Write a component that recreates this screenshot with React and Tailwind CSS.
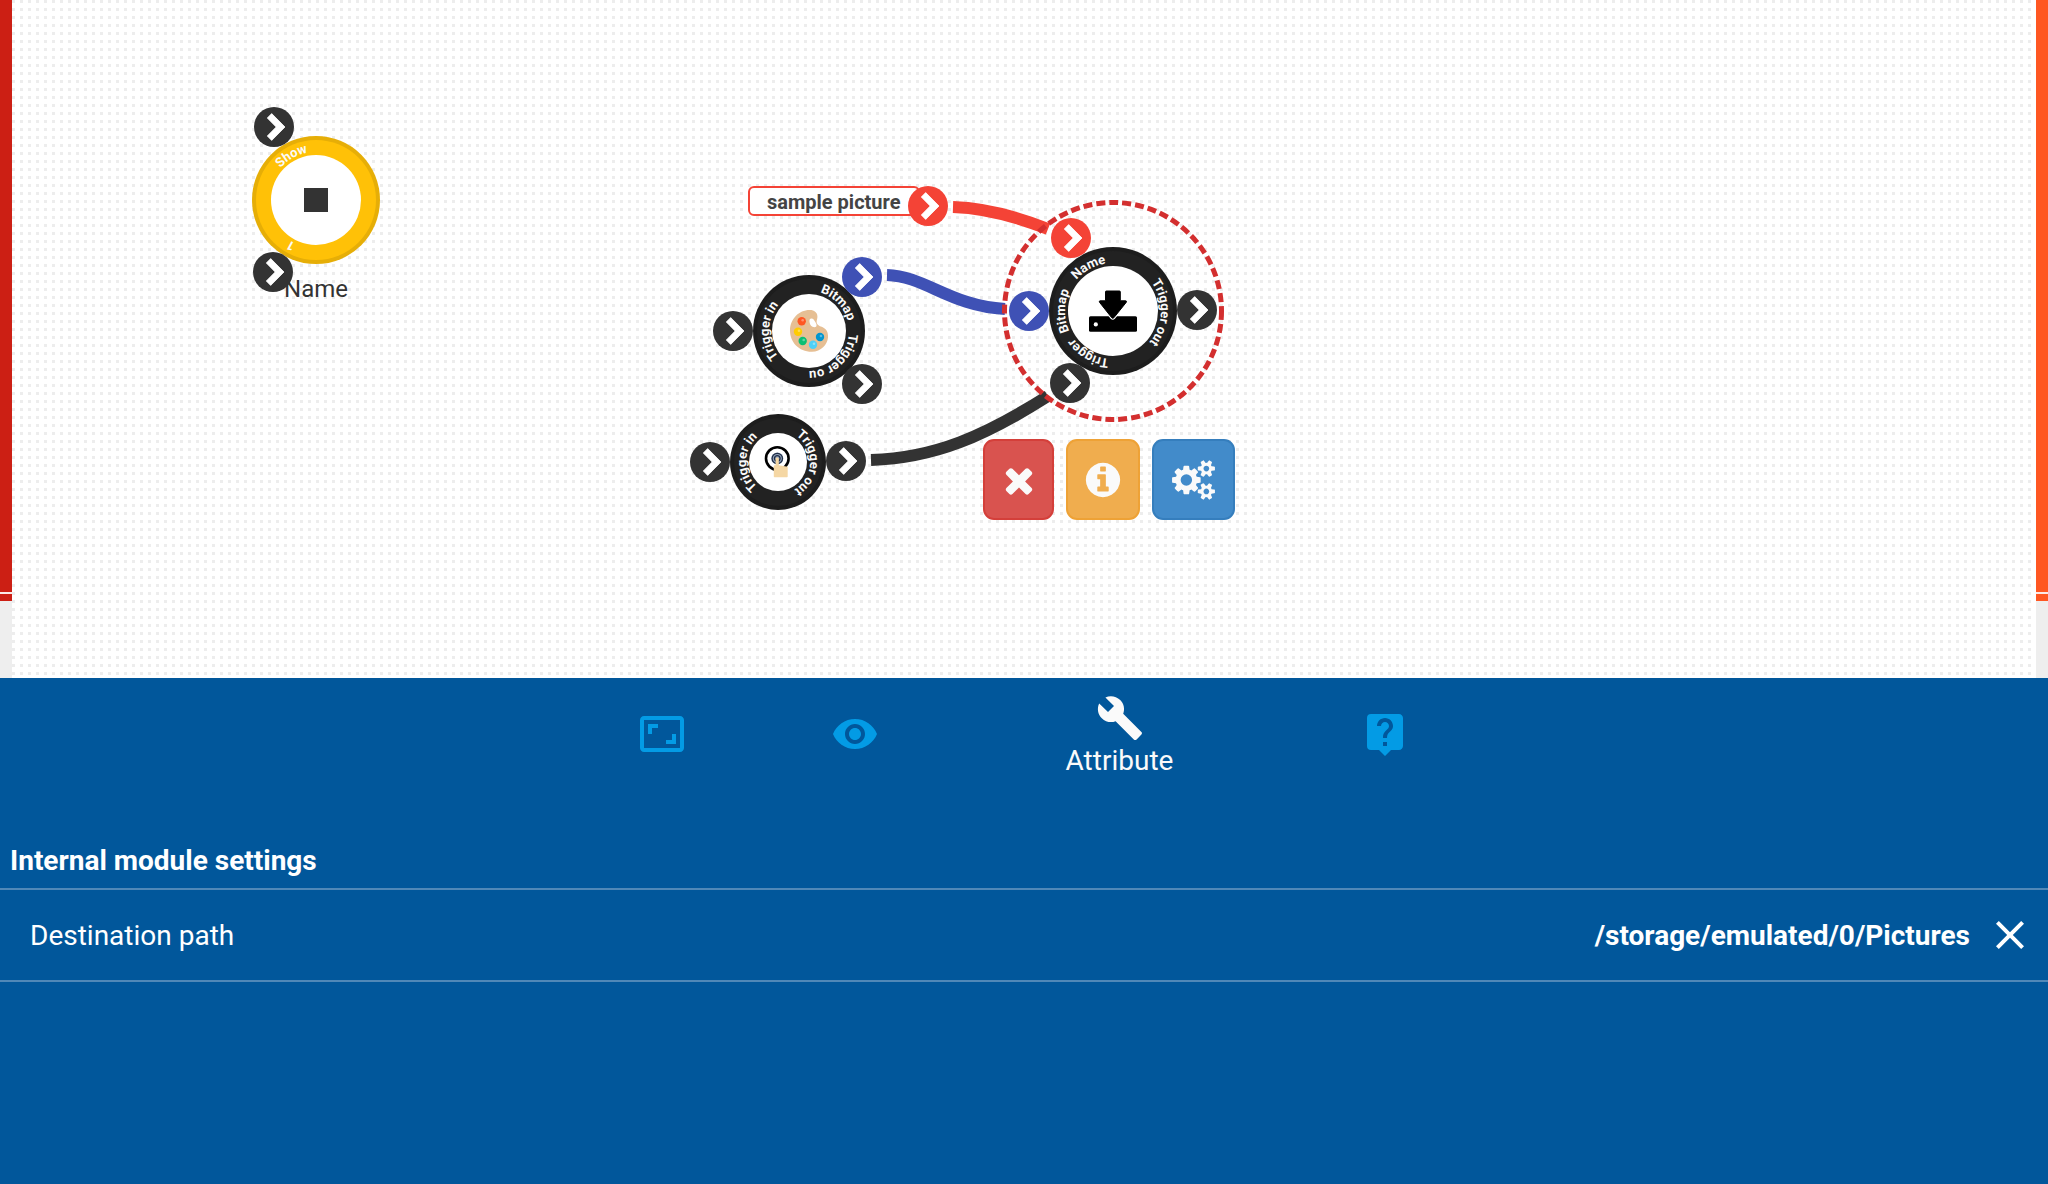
import React from "react";
import {
  MdAspectRatio,
  MdVisibility,
  MdBuild,
  MdLiveHelp,
  MdClose,
} from "react-icons/md";

const FA_TIMES =
  "M1490 1322q0 40-28 68l-136 136q-28 28-68 28t-68-28l-294-294-294 294q-28 28-68 28t-68-28l-136-136q-28-28-28-68t28-68l294-294-294-294q-28-28-28-68t28-68l136-136q28-28 68-28t68 28l294 294 294-294q28-28 68-28t68 28l136 136q28 28 28 68t-28 68l-294 294 294 294q28 28 28 68z";
const FA_INFO =
  "M1152 1376v-160q0-14-9-23t-23-9h-96v-512q0-14-9-23t-23-9h-320q-14 0-23 9t-9 23v160q0 14 9 23t23 9h96v320h-96q-14 0-23 9t-9 23v160q0 14 9 23t23 9h448q14 0 23-9t9-23zm-128-896v-160q0-14-9-23t-23-9h-192q-14 0-23 9t-9 23v160q0 14 9 23t23 9h192q14 0 23-9t9-23zm640 416q0 209-103 385.5t-279.5 279.5-385.5 103-385.5-103-279.5-279.5-103-385.5 103-385.5 279.5-279.5 385.5-103 385.5 103 279.5 279.5 103 385.5z";
const FA_COGS =
  "M832 896q0-106-75-181t-181-75-181 75-75 181 75 181 181 75 181-75 75-181zm768 512q0-52-38-90t-90-38-90 38-38 90q0 53 37.5 90.5t90.5 37.5 90.5-37.5 37.5-90.5zm0-1024q0-52-38-90t-90-38-90 38-38 90q0 53 37.5 90.5t90.5 37.5 90.5-37.5 37.5-90.5zm-384 421v185q0 10-7 19.5t-16 10.5l-155 24q-11 35-32 76 34 48 90 115 7 11 7 20 0 12-7 19-23 30-82.5 89.5t-78.5 59.5q-11 0-21-7l-115-90q-37 19-77 31-11 108-23 155-7 24-30 24h-186q-11 0-20-7.5t-10-17.5l-23-153q-34-10-75-31l-118 89q-7 7-20 7-11 0-21-8-144-133-144-160 0-9 7-19 10-14 41-53t47-61q-23-44-35-82l-152-24q-10-1-17-9.5t-7-19.5v-185q0-10 7-19.5t16-10.5l155-24q11-35 32-76-34-48-90-115-7-11-7-20 0-12 7-20 22-30 82-89t79-59q11 0 21 7l115 90q34-18 77-32 11-108 23-154 7-24 30-24h186q11 0 20 7.5t10 17.5l23 153q34 10 75 31l118-89q8-7 20-7 11 0 21 8 144 133 144 160 0 8-7 19-12 16-42 54t-45 60q23 48 34 82l152 23q10 2 17 10.5t7 19.5zm640 533v140q0 16-149 31-12 27-30 52 51 113 51 138 0 4-4 7-122 71-124 71-8 0-46-47t-52-68q-20 2-30 2t-30-2q-14 21-52 68t-46 47q-2 0-124-71-4-3-4-7 0-25 51-138-18-25-30-52-149-15-149-31v-140q0-16 149-31 13-29 30-52-51-113-51-138 0-4 4-7 4-2 35-20t59-34 30-16q8 0 46 46.5t52 67.5q20-2 30-2t30 2q51-71 92-112l6-2q4 0 124 70 4 3 4 7 0 25-51 138 17 23 30 52 149 15 149 31zm0-1024v140q0 16-149 31-12 27-30 52 51 113 51 138 0 4-4 7-122 71-124 71-8 0-46-47t-52-68q-20 2-30 2t-30-2q-14 21-52 68t-46 47q-2 0-124-71-4-3-4-7 0-25 51-138-18-25-30-52-149-15-149-31v-140q0-16 149-31 13-29 30-52-51-113-51-138 0-4 4-7 4-2 35-20t59-34 30-16q8 0 46 46.5t52 67.5q20-2 30-2t30 2q51-71 92-112l6-2q4 0 124 70 4 3 4 7 0 25-51 138 17 23 30 52 149 15 149 31z";

/* Arc through `angle` (degrees clockwise from east), drawn clockwise. */
function arcPath(r, angle) {
  const at = (deg) => {
    const a = (deg * Math.PI) / 180;
    return `${(r * Math.cos(a)).toFixed(2)} ${(r * Math.sin(a)).toFixed(2)}`;
  };
  return `M${at(angle - 85)} A${r} ${r} 0 0 1 ${at(angle + 85)}`;
}

function Port({ x, y, color = "bg-[#333333]", label }) {
  return (
    <button
      type="button"
      aria-label={label}
      className={`absolute size-10 -translate-x-1/2 -translate-y-1/2 rounded-full ${color}`}
      style={{ left: x, top: y }}
    >
      <svg viewBox="-20 -20 40 40" className="size-10" aria-hidden="true">
        <path
          d="M-2.3 -13.4L11 0L-2.3 13.4L-6.7 9L2.2 0L-6.7 -9Z"
          fill="#fff"
          stroke="#fff"
          strokeWidth="0.8"
          strokeLinejoin="round"
        />
      </svg>
    </button>
  );
}

function Node({ id, x, y, r, inner, fill, edge, labels, children }) {
  const box = { left: x, top: y, width: r * 2, height: r * 2 };
  return (
    <div className="absolute -translate-x-1/2 -translate-y-1/2" style={box}>
      <svg
        viewBox={`${-r} ${-r} ${r * 2} ${r * 2}`}
        className="size-full"
        aria-hidden="true"
      >
        <circle r={r} fill={edge} />
        <circle r={r - 4} fill={fill} />
        <circle r={inner} fill="#fff" />
        {children}
        {labels.map(([text, angle], i) => (
          <g key={text}>
            <path id={`${id}-${i}`} d={arcPath(inner + 3, angle)} fill="none" />
            <text
              fill="#fafafa"
              textAnchor="middle"
              className="text-[13px] font-bold"
            >
              <textPath href={`#${id}-${i}`} startOffset="50%">
                {text}
              </textPath>
            </text>
          </g>
        ))}
      </svg>
    </div>
  );
}

function PaletteIcon() {
  const paints = [
    [-7.3, -9.7, "#ff5722"],
    [-11, 0.7, "#ffcc00"],
    [-6.3, 10, "#0bbf73"],
    [4, 13.7, "#4dd0f7"],
    [11, 6, "#0396cf"],
  ];
  return (
    <g>
      <path
        d="M4 -20.5C8.5 -19 9.3 -14.5 7.8 -10.8C7 -7.5 9 -5.5 12 -4.5C17 -2.8 19.5 1 19 6.5C18.3 14 12 20.5 3 20.8C-10 21 -19 11 -19 -0.5C-19 -12 -10 -21 0.5 -21C2 -21 3 -20.9 4 -20.5Z"
        fill="#e6bf94"
      />
      <path
        d="M1.5 -12.2C4 -13 5 -11 6.3 -9C8 -6.5 8.2 -4 5.5 -3.8C2.5 -3.8 1 -6 0.6 -8.5C0.3 -10.5 0.4 -11.8 1.5 -12.2Z"
        fill="#fff"
      />
      {paints.map(([cx, cy, color]) => (
        <g key={color}>
          <circle cx={cx} cy={cy} r="4.2" fill={color} />
          <circle cx={cx + 1} cy={cy - 1} r="1.3" fill="#fff" opacity="0.35" />
        </g>
      ))}
    </g>
  );
}

function TouchIcon() {
  return (
    <g>
      <circle cx="-0.7" cy="-3.5" r="11.3" fill="#fff" stroke="#000" strokeWidth="2.6" />
      <circle cx="-0.7" cy="-3.5" r="6" fill="#8fa0b8" />
      <circle cx="-0.7" cy="-3.5" r="5.2" fill="none" stroke="#1f2c44" strokeWidth="1.2" />
      <circle cx="-0.7" cy="-3.5" r="2.8" fill="none" stroke="#1f2c44" strokeWidth="1.3" />
      <path
        d="M-2.4 -3.2C-2.4 -5 0.8 -5 0.8 -3.2V3.2L9.7 4.8V14.5C9.7 15 9.5 15.3 9 15.3H-3.4C-4 15.3 -4.2 15 -4.2 14.5V4.5C-4.2 3.5 -3.5 3 -2.4 3.2Z"
        fill="#f5d7a4"
      />
    </g>
  );
}

function SaveIcon() {
  const arrow =
    "M-7.5 -19.2Q-7.5 -20 -6.7 -20H6.5Q7.3 -20 7.3 -19.2V-10.2H12.7Q14.2 -10 13.2 -8.6L0.8 6.8Q-0.2 7.8 -1.2 6.8L-13.4 -8.6Q-14.4 -10 -12.9 -10.2H-7.5Z";
  return (
    <g>
      <rect x="-24" y="5.3" width="48" height="15.4" rx="1.5" fill="#000" />
      <circle cx="-17.2" cy="13.4" r="2.1" fill="#fff" />
      <path d={arrow} fill="#fff" stroke="#fff" strokeWidth="3" />
      <path d={arrow} fill="#000" stroke="#000" strokeLinejoin="round" />
    </g>
  );
}

const RED = "bg-[#f44336]";
const BLUE = "bg-[#3f51b5]";

const ports = [
  { x: 274, y: 127, label: "Show" },
  { x: 273, y: 272, label: "1" },
  { x: 928, y: 206, color: RED, label: "sample picture output" },
  { x: 733, y: 331, label: "Trigger in" },
  { x: 862, y: 277, color: BLUE, label: "Bitmap output" },
  { x: 862, y: 384, label: "Trigger out" },
  { x: 710, y: 462, label: "Trigger in" },
  { x: 846, y: 461, label: "Trigger out" },
  { x: 1071, y: 238, color: RED, label: "Name" },
  { x: 1029, y: 311, color: BLUE, label: "Bitmap" },
  { x: 1070, y: 383, label: "Trigger" },
  { x: 1197, y: 310, label: "Trigger out" },
];

const dark = { fill: "#222222", edge: "#1d1d1d" };

function ActionButton({ label, className, children }) {
  return (
    <button
      type="button"
      aria-label={label}
      className={`flex h-[81px] items-center justify-center rounded-[11px] border-2 ${className}`}
    >
      {children}
    </button>
  );
}

function Edge({ color }) {
  return (
    <div className="flex w-3 shrink-0 flex-col bg-[#eeeeee]" aria-hidden="true">
      <div className={`h-[592px] ${color}`} />
      <div className="h-0.5 bg-[#fbe9e7]" />
      <div className={`h-[7px] ${color}`} />
    </div>
  );
}

function Canvas() {
  return (
    <main className="relative flex overflow-hidden bg-white">
      <Edge color="bg-[#cc1f14]" />
      <div className="grow bg-[linear-gradient(to_right,transparent_3px,white_3px),linear-gradient(to_bottom,#ededed_3px,white_3px)] bg-[size:8px_8px]" />
      <Edge color="bg-[#ff5722]" />

      <p
        className="absolute -translate-x-1/2 text-2xl leading-8 text-[#333333]"
        style={{ left: 316, top: 273 }}
      >
        Name
      </p>

      <div
        className="absolute flex h-[30px] w-[172px] items-center rounded-md border-2 border-[#f44336] bg-white pt-0.5 pl-[17px] text-xl font-bold text-[#444444]"
        style={{ left: 748, top: 186 }}
      >
        sample picture
      </div>

      <svg
        className="absolute overflow-visible"
        style={{ left: 0, top: 0 }}
        width="1300"
        height="600"
        fill="none"
        strokeWidth="12"
        aria-hidden="true"
      >
        <path d="M953 207C985 208 1015 216 1048 229" stroke="#f44336" />
        <path d="M887 275C925 276 950 306 1005 309" stroke="#3f51b5" />
        <path d="M871 460C935 458 985 436 1048 396" stroke="#333333" />
      </svg>

      <Node
        id="show"
        x={316}
        y={200}
        r={64}
        inner={45}
        fill="#ffc107"
        edge="#e6ae07"
        labels={[["Show", -119], ["1", 119]]}
      >
        <rect x="-12" y="-12" width="24" height="24" fill="#333" />
      </Node>
      <Node
        id="bitmap"
        x={809}
        y={331}
        r={56}
        inner={37}
        {...dark}
        labels={[["Bitmap", -44], ["Trigger ou", 47], ["Trigger in", 180]]}
      >
        <PaletteIcon />
      </Node>
      <Node
        id="touch"
        x={778}
        y={462}
        r={48}
        inner={29}
        {...dark}
        labels={[["Trigger in", 180], ["Trigger out", 2]]}
      >
        <TouchIcon />
      </Node>
      <Node
        id="save"
        x={1113}
        y={311}
        r={64}
        inner={45}
        {...dark}
        labels={[["Name", -119], ["Bitmap", 180], ["Trigger", 120], ["Trigger out", 2]]}
      >
        <SaveIcon />
      </Node>

      <svg
        viewBox="-112 -112 224 224"
        className="pointer-events-none absolute size-56 -translate-x-1/2 -translate-y-1/2"
        style={{ left: 1113, top: 311 }}
        aria-hidden="true"
      >
        <circle
          r="108.5"
          fill="none"
          stroke="#d32f2f"
          strokeWidth="5"
          strokeDasharray="9 4"
        />
      </svg>

      {ports.map((p) => (
        <Port key={`${p.x}-${p.y}`} {...p} />
      ))}

      <div className="absolute flex gap-3" style={{ left: 983, top: 439 }}>
        <ActionButton label="Delete" className="w-[71px] border-[#d43f3a] bg-[#d9534f]">
          <svg viewBox="0 0 1792 1792" className="size-10 shrink-0" fill="#fafafa" aria-hidden="true">
            <path d={FA_TIMES} />
          </svg>
        </ActionButton>
        <ActionButton label="Info" className="w-[74px] border-[#eea236] bg-[#f0ad4e]">
          <svg viewBox="0 0 1792 1792" className="size-10 shrink-0" fill="#fafafa" aria-hidden="true">
            <path d={FA_INFO} />
          </svg>
        </ActionButton>
        <ActionButton label="Settings" className="w-[83px] border-[#357ebd] bg-[#428bca]">
          <svg viewBox="-64 0 1920 1792" className="h-10 w-[43px] shrink-0" fill="#fafafa" aria-hidden="true">
            <path d={FA_COGS} />
          </svg>
        </ActionButton>
      </div>
    </main>
  );
}

const tabs = [
  { label: "Size", Icon: MdAspectRatio },
  { label: "View", Icon: MdVisibility },
  { label: "Attribute", Icon: MdBuild, active: true },
  { label: "Help", Icon: MdLiveHelp },
];

function SettingsPanel() {
  return (
    <section className="bg-[#01579b] text-white">
      <nav className="flex h-28 justify-center pr-0.5">
        {tabs.map(({ label, Icon, active }) =>
          active ? (
            <button
              key={label}
              type="button"
              aria-current="page"
              className="flex w-[337px] flex-col items-center pt-4 text-[28px] leading-[38px] text-[#fafafa]"
            >
              <Icon className="size-12" aria-hidden="true" />
              {label}
            </button>
          ) : (
            <button
              key={label}
              type="button"
              aria-label={label}
              className="flex w-[193px] items-center justify-center text-[#039be5]"
            >
              <Icon className="size-12" aria-hidden="true" />
            </button>
          )
        )}
      </nav>
      <h2 className="border-b-2 border-[#5088b8] px-2.5 pt-[52px] pb-2 text-[28px] leading-[38px] font-bold">
        Internal module settings
      </h2>
      <div className="flex h-[92px] items-center border-b-2 border-[#5088b8] pr-3.5 pl-[30px] text-[28px] leading-[38px]">
        <span className="grow pt-0.5">Destination path</span>
        <span className="mr-4 pt-0.5 font-bold">/storage/emulated/0/Pictures</span>
        <button type="button" aria-label="Clear destination path">
          <MdClose className="size-12" aria-hidden="true" />
        </button>
      </div>
    </section>
  );
}

export default function App() {
  return (
    <div className="grid min-h-screen grid-rows-[678fr_506fr] font-[Roboto,sans-serif]">
      <Canvas />
      <SettingsPanel />
    </div>
  );
}
